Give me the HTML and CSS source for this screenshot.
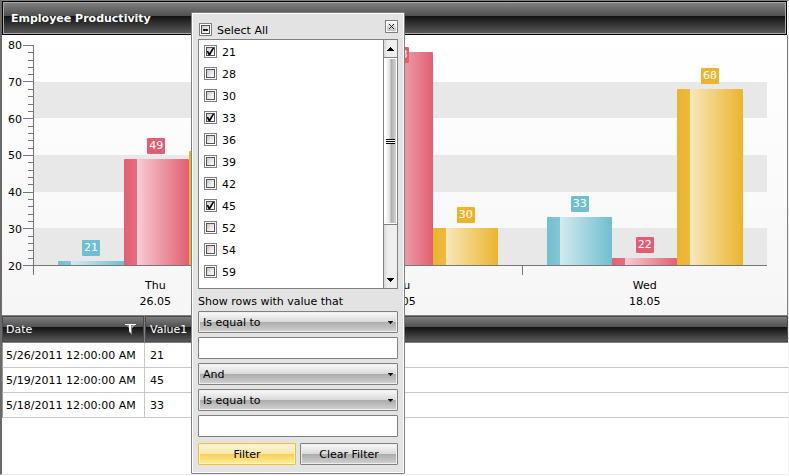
FILE: index.html
```html
<!DOCTYPE html>
<html lang="en">
<head>
<meta charset="utf-8">
<title>Employee Productivity</title>
<link rel="stylesheet" href="styles.css">
</head>
<body>
<svg class="defs" aria-hidden="true">
  <symbol id="arrow" viewBox="0 0 7 4"><path d="M0 0H7V1H6V2H5V3H4V4H3V3H2V2H1V1H0Z"/></symbol>
</svg>
<main class="window">
  <h1 class="title">Employee Productivity</h1>

  <section class="chart" aria-label="Productivity chart">
    <ul class="scale">
      <li>80</li><li>70</li><li>60</li><li>50</li><li>40</li><li>30</li><li>20</li>
    </ul>
    <svg class="axis" width="11" height="230" viewBox="0 0 11 230" shape-rendering="crispEdges" aria-hidden="true">
      <path fill="#777" d="M10 0h1v230h-1zM0 0h11v1H0zM0 36h11v1H0zM0 73h11v1H0zM0 110h11v1H0zM0 147h11v1H0zM0 183h11v1H0zM0 220h11v1H0z
        M5 7h6v1H5zM5 15h6v1H5zM5 22h6v1H5zM5 29h6v1H5zM5 44h6v1H5zM5 51h6v1H5zM5 59h6v1H5zM5 66h6v1H5zM5 81h6v1H5zM5 88h6v1H5zM5 95h6v1H5zM5 103h6v1H5z
        M5 117h6v1H5zM5 125h6v1H5zM5 132h6v1H5zM5 139h6v1H5zM5 154h6v1H5zM5 161h6v1H5zM5 169h6v1H5zM5 176h6v1H5zM5 191h6v1H5zM5 198h6v1H5zM5 205h6v1H5zM5 213h6v1H5z"/>
    </svg>
    <div class="plot">
      <div class="group">
        <div class="slot blue" style="--h:1.67%"><i class="bar"></i><span class="tag">21</span></div>
        <div class="slot red" style="--h:48.33%"><i class="bar"></i><span class="tag">49</span></div>
        <div class="slot gold" style="--h:51.67%"><i class="bar"></i></div>
      </div>
      <div class="group">
        <div class="slot blue" style="--h:41.67%"><i class="bar"></i></div>
        <div class="slot red" style="--h:96.67%"><i class="bar"></i><span class="tag">78</span></div>
        <div class="slot gold" style="--h:16.67%"><i class="bar"></i><span class="tag">30</span></div>
      </div>
      <div class="group">
        <div class="slot blue" style="--h:21.67%"><i class="bar"></i><span class="tag">33</span></div>
        <div class="slot red" style="--h:3.33%"><i class="bar"></i><span class="tag">22</span></div>
        <div class="slot gold" style="--h:80%"><i class="bar"></i><span class="tag">68</span></div>
      </div>
    </div>
    <div class="days">
      <div class="day">Thu<br>26.05</div>
      <div class="day">Thu<br>19.05</div>
      <div class="day">Wed<br>18.05</div>
    </div>
  </section>

  <table class="grid">
    <thead>
      <tr>
        <th class="date"><div class="head">Date
          <button class="funnel" aria-label="Filter Date"><svg width="11" height="11" viewBox="0 0 11 11"><path fill="#888" d="M1 1H9L7 4V11L4 8V4Z"/><path fill="#fff" d="M0 0H11V1H0ZM4 1H6V9L4 7Z"/><path fill="#ccc" d="M9 1H10L7 4V3Z"/></svg></button></div></th>
        <th>Value1</th>
      </tr>
    </thead>
    <tbody>
      <tr><td class="date">5/26/2011 12:00:00 AM</td><td>21</td></tr>
      <tr><td class="date">5/19/2011 12:00:00 AM</td><td>45</td></tr>
      <tr><td class="date">5/18/2011 12:00:00 AM</td><td>33</td></tr>
    </tbody>
  </table>

  <form class="popup">
    <div class="top">
      <label class="check all"><input type="checkbox" class="some">Select All</label>
      <button type="button" class="close" aria-label="Close"><svg width="7" height="7" viewBox="0 0 7 7"><path d="M1 1L6 6M6 1L1 6" stroke="#222" stroke-width="1"/></svg></button>
    </div>
    <div class="list">
      <div class="items">
        <label class="check"><input type="checkbox" checked>21</label>
        <label class="check"><input type="checkbox">28</label>
        <label class="check"><input type="checkbox">30</label>
        <label class="check"><input type="checkbox" checked>33</label>
        <label class="check"><input type="checkbox">36</label>
        <label class="check"><input type="checkbox">39</label>
        <label class="check"><input type="checkbox">42</label>
        <label class="check"><input type="checkbox" checked>45</label>
        <label class="check"><input type="checkbox">52</label>
        <label class="check"><input type="checkbox">54</label>
        <label class="check"><input type="checkbox">59</label>
      </div>
      <div class="scroll">
        <button type="button" class="step" aria-label="Scroll up"><svg class="up" width="7" height="4"><use href="#arrow"/></svg></button>
        <div class="thumb"><i class="grip"></i></div>
        <button type="button" class="step down" aria-label="Scroll down"><svg width="7" height="4"><use href="#arrow"/></svg></button>
      </div>
    </div>
    <p class="caption">Show rows with value that</p>
    <div class="fields">
      <div class="pick"><select aria-label="First condition"><option>Is equal to</option></select><svg width="5" height="3" viewBox="0 0 7 4"><use href="#arrow"/></svg></div>
      <input class="text" type="text" aria-label="First value">
      <div class="pick"><select aria-label="Operator"><option>And</option></select><svg width="5" height="3" viewBox="0 0 7 4"><use href="#arrow"/></svg></div>
      <div class="pick"><select aria-label="Second condition"><option>Is equal to</option></select><svg width="5" height="3" viewBox="0 0 7 4"><use href="#arrow"/></svg></div>
      <input class="text" type="text" aria-label="Second value">
    </div>
    <div class="actions">
      <button type="button" class="btn primary">Filter</button>
      <button type="button" class="btn">Clear Filter</button>
    </div>
  </form>
</main>
</body>
</html>
```
FILE: styles.css
```css
* { box-sizing: border-box; }
body {
  margin: 0;
  background: #fff;
  color: #000;
  font: 11px/16px "DejaVu Sans", Verdana, sans-serif;
}
button, input, select { font: inherit; color: inherit; margin: 0; padding: 0; border-radius: 0; }
.defs { position: absolute; width: 0; height: 0; }

.window {
  position: relative;
  min-height: calc(100vh - 1px);
  border-top: 1px solid #808080;
  border-left: 2px solid #6a6a6a;
  border-right: 1px solid #eee;
  border-bottom: 1px solid #eee;
}

.title {
  height: 34px;
  margin: 0 1px 0 0;
  padding: 1px 8px 0;
  border: 1px solid #000;
  box-shadow: inset 0 0 0 1px #aaa;
  background: linear-gradient(#828282, #505050 43%, #111 43%, #5c5c5c);
  color: #fff;
  font-size: 11px;
  font-weight: bold;
  line-height: 32px;
}

/* Chart */
.chart {
  display: grid;
  grid-template-columns: 15px 11px 1fr;
  grid-template-rows: 221px auto;
  padding: 10px 20px 5px 6px;
  border-right: 1px solid #808080;
  background: linear-gradient(#fff, #f6f6f6);
}
.scale {
  display: flex;
  flex-direction: column;
  justify-content: space-between;
  margin: -7px 0 -9px;
  padding: 0;
  list-style: none;
}
.plot {
  display: flex;
  border-bottom: 1px solid #777;
  background: repeating-linear-gradient(transparent 0 16.667%, #e8e8e8 16.667% 33.333%);
}
.group { flex: 1; display: flex; padding: 0 3.33%; }
.slot { position: relative; flex: 1; display: flex; align-items: flex-end; }
.bar {
  width: 100%;
  height: var(--h);
  border-radius: 1px 1px 0 0;
  background: linear-gradient(90deg, var(--c), var(--c2) 20%, var(--light) 20%, var(--c));
}
.tag {
  position: absolute;
  left: 50%;
  bottom: min(calc(var(--h) + 5px), calc(100% - 18px));
  min-width: 18px;
  transform: translateX(-50%);
  border-radius: 1px;
  background: var(--c);
  color: #fff;
  text-align: center;
}
.blue { --c: #70bfd0; --c2: #82c7d6; --light: #d3eaf0; }
.red { --c: #e25f73; --c2: #e56e80; --light: #f6ccd3; }
.gold { --c: #ebb42d; --c2: #ecba40; --light: #f8e7bc; }
.days { grid-column: 3; display: flex; margin-left: -1px; }
.day {
  flex: 1;
  padding-top: 12px;
  text-align: center;
  background: linear-gradient(#777, #777) 0 0 / 1px 9px no-repeat;
}
.day:first-child { background: none; }

/* Data grid */
.grid { width: 100%; border-collapse: separate; border-spacing: 0; }
.grid th {
  height: 28px;
  padding: 1px 6px 0 5px;
  border-top: 1px solid #808080;
  border-bottom: 1px solid #808080;
  box-shadow: inset 0 0 0 1px #4a4a4a;
  background: linear-gradient(#828282, #505050 43%, #111 43%, #5c5c5c);
  color: #fff;
  font-weight: normal;
  text-align: left;
}
.grid td { height: 25px; padding: 2px 0 0 5px; border-bottom: 1px solid #c9c9c9; }
.grid .date { width: 143px; padding-left: 4px; border-right: 1px solid #c9c9c9; white-space: nowrap; }
.grid th.date { padding-right: 8px; border-right-color: #808080; }
.grid td.date { border-left: 1px solid #999; padding-left: 3px; }
.head { display: flex; justify-content: space-between; align-items: center; }
.funnel { display: flex; border: 0; background: none; }

/* Filter popup */
.popup {
  position: absolute;
  top: 11px;
  left: 189px;
  width: 214px;
  padding: 6px 6px 8px;
  border: 1px solid #808080;
  border-radius: 1px;
  box-shadow: inset 0 0 0 1px #fff;
  background: #e3e3e3;
}
.top { display: flex; justify-content: space-between; height: 20px; }
.check { display: flex; gap: 5px; height: 22px; line-height: 24px; }
.all { margin-left: 1px; }
.check input {
  appearance: none;
  display: grid;
  place-items: center;
  width: 13px;
  height: 13px;
  margin-top: 4px;
  border: 1px solid #808080;
  box-shadow: inset 0 0 0 1px #fff, inset 0 0 0 2px #555;
  background: linear-gradient(135deg, #bbb, #fff 80%);
}
.check input:checked::after {
  content: "";
  width: 8px;
  height: 8px;
  background: #000;
  clip-path: polygon(0 45%, 22% 45%, 36% 68%, 80% 0, 100% 0, 44% 100%, 28% 100%);
}
.check .some::after {
  content: "";
  width: 5px;
  height: 2px;
  background: #222;
}
.close {
  display: grid;
  place-items: center;
  width: 13px;
  height: 13px;
  margin-top: 1px;
  border: 1px solid #808080;
  box-shadow: inset 0 0 0 1px #fff;
  background: linear-gradient(#fff, #bbb);
}
.list {
  display: flex;
  height: 250px;
  border: 1px solid #808080;
  background: #fff;
}
.items { flex: 1; padding: 1px 5px; overflow: hidden; }
.scroll {
  display: flex;
  flex-direction: column;
  width: 14px;
  border-left: 1px solid #808080;
  background: linear-gradient(90deg, #d8d8d8, #eee 30%, #eee);
}
.step { display: grid; place-items: center; height: 17px; border: 0; background: none; }
.down { margin-top: auto; }
.up { transform: scaleY(-1); }
.thumb {
  display: grid;
  align-items: center;
  height: 168px;
  border: solid #808080;
  border-width: 1px 0;
  box-shadow: inset 0 0 0 1px #fff;
  background: linear-gradient(90deg, #fff 10%, #ddd 48%, #aaa 52%, #ddd);
}
.grip { height: 5px; margin: 0 2px; background: repeating-linear-gradient(#000 0 1px, #fff 1px 2px); }
.caption { margin: 5px 0 1px; }
.fields { display: grid; gap: 4px; }
.pick { display: grid; align-items: center; }
.pick > * { grid-area: 1 / 1; }
.pick svg { justify-self: end; margin-right: 5px; pointer-events: none; }
.pick select, .text, .btn {
  width: 100%;
  height: 22px;
  border: 1px solid #808080;
  border-radius: 1px;
}
.pick select {
  appearance: none;
  padding: 1px 4px 0;
  box-shadow: inset 0 0 0 1px #eee;
  background: linear-gradient(#fbfbfb, #d8d8d8 50%, #ababab 50%, #d2d2d2);
}
.text { padding: 0 4px; background: #fff; }
.actions { display: grid; grid-template-columns: 1fr 1fr; gap: 4px; margin-top: 6px; }
.btn {
  padding-top: 1px;
  box-shadow: inset 0 0 0 1px #eee;
  background: linear-gradient(#fbfbfb, #d8d8d8 50%, #ababab 50%, #d2d2d2);
}
.btn.primary {
  border-color: #f2c030;
  box-shadow: inset 0 0 0 1px #fdf3c4;
  background: linear-gradient(#fcf6de, #f9e6a8 50%, #f8cd55 50%, #fdf096);
}
```
